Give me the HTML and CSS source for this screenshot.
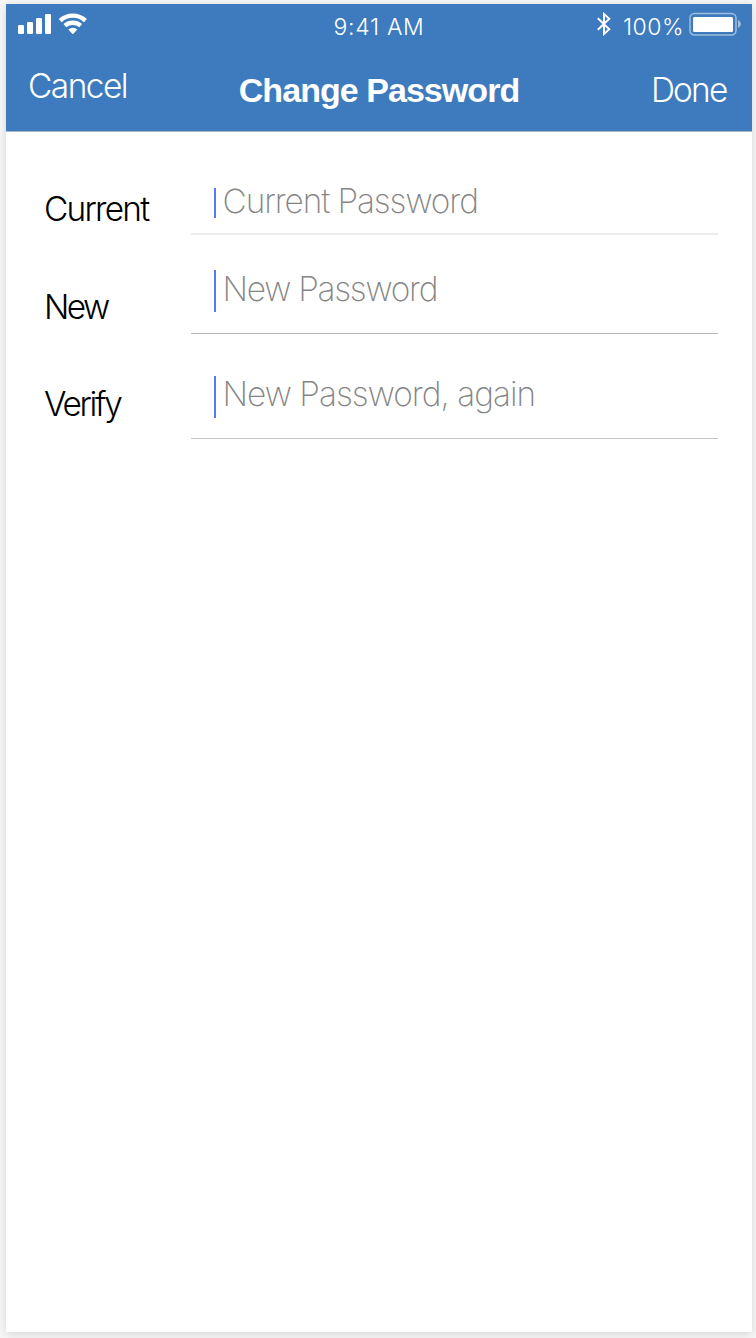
FILE: index.html
```html
<!DOCTYPE html>
<html lang="en">
<head>
<meta charset="utf-8">
<title>Change Password</title>
<link rel="stylesheet" href="styles.css">
</head>
<body>
<main class="phone">
  <header class="header">
    <div class="status">
      <svg class="signal" width="72" height="24" viewBox="0 0 72 24" fill="#fff">
        <rect x="0" y="13" width="6" height="9" rx="1.3"/>
        <rect x="9" y="10" width="6" height="12" rx="1.3"/>
        <rect x="18" y="6" width="6" height="16" rx="1.3"/>
        <rect x="27" y="2" width="6" height="20" rx="1.3"/>
        <g fill="none" stroke="#fff" stroke-width="4.300">
          <path d="M42.200 8.600A18.500 18.500 0 0 1 67.400 8.600"/>
          <path d="M46.900 13.700A12 12 0 0 1 62.700 13.700"/>
        </g>
        <path d="M50.300 17.500Q54.800 13.900 59.300 17.500L55.400 21.700Q54.800 22.300 54.200 21.700Z"/>
      </svg>
      <span class="time">9:41 AM</span>
      <div class="power">
        <svg width="14" height="24" viewBox="0 0 14 24" fill="none" stroke="#fff" stroke-width="1.900"><path d="M.8 6.300L12.300 17.300L7 22V2L12.300 6.700L.8 17.700"/></svg>
        <span class="percent">100%</span>
        <svg class="battery" width="54" height="24" viewBox="0 0 54 24">
          <rect x="1" y="1.500" width="46" height="21.500" rx="4.500" fill="none" stroke="#fff" stroke-opacity=".5" stroke-width="1.500"/>
          <rect x="4" y="5" width="40" height="15" rx="1.500" fill="#fff"/>
          <path d="M49 8Q52 9.500 52 12T49 16Z" fill="#fff" fill-opacity=".5"/>
        </svg>
      </div>
    </div>
    <nav class="nav">
      <span class="cancel">Cancel</span>
      <h1 class="title">Change Password</h1>
      <span class="done">Done</span>
    </nav>
  </header>
  <form class="form">
    <div class="row row-current">
      <span class="label label-current">Current</span>
      <div class="field"><i class="caret"></i><span class="hint hint-current">Current Password</span></div>
    </div>
    <div class="row row-new">
      <span class="label label-new">New</span>
      <div class="field"><i class="caret"></i><span class="hint">New Password</span></div>
    </div>
    <div class="row row-verify">
      <span class="label label-verify">Verify</span>
      <div class="field"><i class="caret"></i><span class="hint hint-verify">New Password, again</span></div>
    </div>
  </form>
</main>
</body>
</html>
```
FILE: styles.css
```css
* { box-sizing: border-box; }
body {
  margin: 0;
  height: 1338px;
  padding: 4px 4px 6px 6px;
  background: #f6f6f6;
  font-family: Inter, "Liberation Sans", sans-serif;
  overflow: hidden;
}
.phone {
  height: 1328px;
  background: #fff;
  box-shadow: 0 2px 9px rgba(0, 0, 0, .13);
}
.header {
  height: 128px;
  background: #3d7bbe;
  border-bottom: 1px solid #a9b4c6;
  color: #fff;
}
.status {
  display: grid;
  grid-template-columns: 1fr auto 1fr;
  height: 45px;
  padding: 8px 12px 0;
  line-height: 30px;
}
.time { font-size: 23px; font-weight: 300; letter-spacing: .7px; }
.power { display: flex; justify-content: flex-end; margin-right: -3px; }
.percent { margin: 0 5px 0 12px; font-size: 23px; font-weight: 300; letter-spacing: .5px; }
.nav {
  display: grid;
  grid-template-columns: 1fr auto 1fr;
  padding: 21px 22px 0 22px;
  line-height: 40px;
  font-size: 33.4px;
  font-weight: 300;
}
.cancel { margin-top: -4px; letter-spacing: -1.5px; }
.title { margin: 0; font: bold 34px/40px "Liberation Sans", sans-serif; letter-spacing: -.95px; }
.done { padding-right: 3.5px; text-align: right; letter-spacing: -1.8px; }
.row {
  display: grid;
  grid-template-columns: 185px 527px;
  font-size: 33.4px;
  font-weight: 300;
  line-height: 40px;
  white-space: nowrap;
}
.label { padding-left: 38px; color: #000; letter-spacing: -1.75px; }
.label-current { margin-top: 57px; }
.label-new { margin-top: 52px; letter-spacing: -2.6px; }
.label-verify { margin-top: 50px; letter-spacing: -2.3px; }
.field { display: flex; align-items: flex-start; padding-left: 22.5px; border-bottom: 1px solid #b9b9b9; }
.caret { width: 2px; height: 42px; background: #527cf5; }
.hint { margin-left: 7px; font-weight: 200; color: #858585; letter-spacing: -1.25px; }
.hint-current { letter-spacing: -1.07px; }
.row-current { height: 103px; }
.row-current .field { padding-top: 49px; border-bottom: 2px solid #ececec; }
.row-current .caret { height: 30px; margin-top: 7px; }
.row-new { height: 99px; }
.row-new .field { padding-top: 34px; }
.row-new .caret { margin-top: 1px; }
.row-verify { height: 105px; }
.row-verify .field { padding-top: 40px; border-bottom-color: #c4c4c4; }
.row-verify .caret { margin-top: 2px; }
.hint-verify { letter-spacing: -.97px; }
```
